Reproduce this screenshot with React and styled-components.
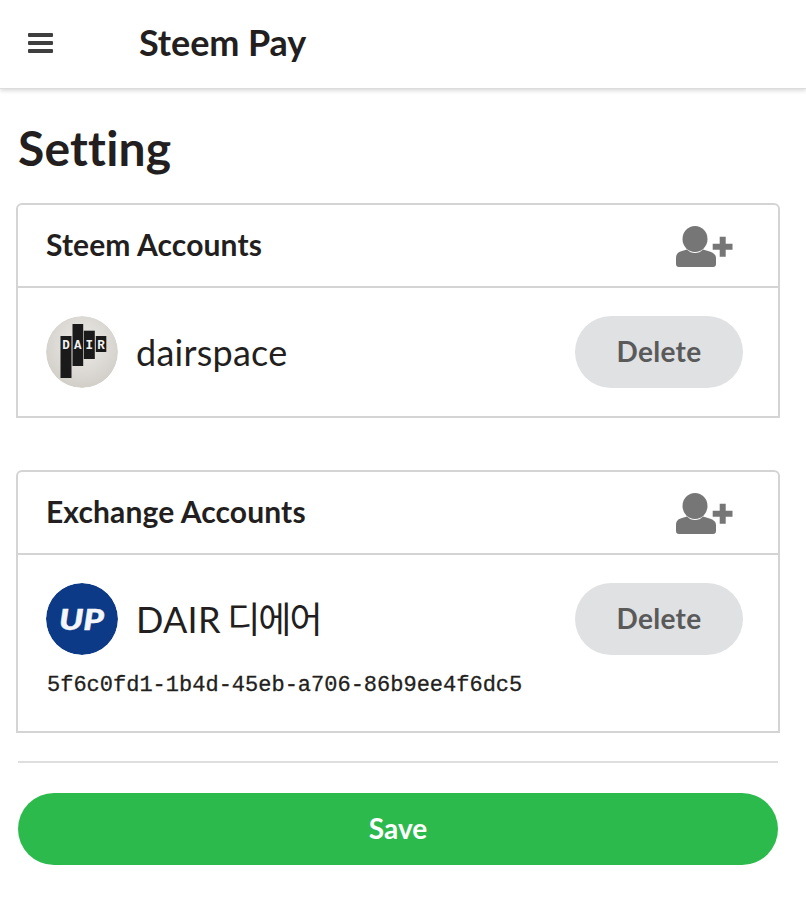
import React from "react";
import styled, { createGlobalStyle } from "styled-components";

const Global = createGlobalStyle`
  html, body { margin: 0; padding: 0; background: #fff; }
  body { font-family: Lato, "Noto Sans CJK KR", sans-serif; color: #231f20; }
  * { box-sizing: border-box; }
`;
const Page = styled.div`width: 806px; height: 914px; overflow: hidden;`;
const TopBar = styled.header`
  height: 89px; display: flex; align-items: center; padding-left: 28px;
  background: #fff; border-bottom: 1px solid #dcdcdc;
  box-shadow: 0 2px 4px rgba(0,0,0,.14);
`;
const Burger = styled.svg`width: 25px; height: 25px; flex: none; display: block; margin-top: -4px;`;
const Brand = styled.div`
  margin-left: 86px; font-size: 36px; font-weight: 700; line-height: 1; letter-spacing: -0.1px; margin-top: -4px;
`;
const Content = styled.main`padding: 30px 28px 0 16px;`;
const Title = styled.h1`
  margin: 0 0 26px 2px; font-size: 48px; font-weight: 700; line-height: 58px; letter-spacing: 0.2px; height: 58px;
`;
const Card = styled.section`
  width: 764px; margin-bottom: ${p => p.$mb}px; border: 2px solid #d4d4d5; border-radius: 6px 6px 0 0;
`;
const CardHead = styled.div`
  height: 83px; padding: 0 45px 0 28px; display: flex; align-items: center; justify-content: space-between;
  border-bottom: 2px solid #d4d4d5;
`;
const CardTitle = styled.h2`margin: 0; font-size: 30px; font-weight: 700; letter-spacing: 0.12px; margin-top: -3px;`;
const CardBody = styled.div`padding: 28px 35px 0 28px; height: ${p => p.$h}px;`;
const Row = styled.div`display: flex; align-items: center;`;
const Avatar = styled.svg`width: 72px; height: 72px; flex: none; display: block; border-radius: 50%;`;
const Name = styled.div`margin-left: 18px; font-size: 36px; line-height: 1; flex: 1; letter-spacing: 0.25px;`;
const Hangul = styled.span`letter-spacing: -2px; margin-left: -3px;`;
const DeleteButton = styled.button`
  width: 168px; height: 72px; border: 0; border-radius: 36px; background: #e0e1e2; color: #5a5a5a;
  font: 700 28px Lato, sans-serif; letter-spacing: 0.3px; padding: 0 0 3px; flex: none;
`;
const ApiKey = styled.div`
  margin: 17px 0 0 1px; font: 400 22px/27px "Liberation Mono", monospace; color: #231f20; white-space: nowrap;
  -webkit-text-stroke: 0.3px #231f20;
`;
const Rule = styled.hr`margin: 0 0 30px 2px; width: 760px; border: 0; border-top: 2px solid #dedede;`;
const SaveButton = styled.button`
  display: block; margin-left: 2px; width: 760px; height: 72px; border: 0; border-radius: 36px; background: #2cba4d; color: #fff;
  font: 700 28px Lato, sans-serif; padding: 0 0 3px;
`;
const IconSvg = styled.svg`width: 57px; height: 41px; display: block; flex: none; margin-top: 2px;`;

const AddUser = () => (
  <IconSvg viewBox="0 0 57 41">
    <ellipse cx="19" cy="13" rx="12.5" ry="13" fill="#767676" />
    <path d="M0 32c0-4 2-6 6-7l5-1.500c2 2.500 5 3.500 8 3.500s6-1 8-3.500l5 1.500c4 1 8 3 8 7v6c0 2-1 3-3 3H3c-2 0-3-1-3-3z" fill="#767676" />
    <path d="M43.700 10.700h6v7h6.800v6h-6.800v7h-6v-7H36.700v-6h7z" fill="#767676" />
  </IconSvg>
);

const DairLogo = () => (
  <Avatar viewBox="0 0 72 72">
    <defs>
      <radialGradient id="g" cx="50%" cy="40%" r="65%">
        <stop offset="0" stopColor="#eeece8" />
        <stop offset="1" stopColor="#cfccc6" />
      </radialGradient>
    </defs>
    <circle cx="36" cy="36" r="36" fill="url(#g)" />
    <rect x="14.500" y="20" width="11" height="42" fill="#1a1a1a" />
    <rect x="26.500" y="8" width="10.700" height="42" fill="#1a1a1a" />
    <rect x="37.800" y="14.700" width="11" height="28.300" fill="#1a1a1a" />
    <rect x="49.800" y="20" width="10.500" height="16" fill="#1a1a1a" />
    <g fill="#f2f2f2" fontFamily="'Liberation Mono', monospace" fontWeight="700" fontSize="12.500" textAnchor="middle">
      <text x="20" y="32.500">D</text>
      <text x="31.800" y="32.500">A</text>
      <text x="43.300" y="32.500">I</text>
      <text x="55" y="32.500">R</text>
    </g>
  </Avatar>
);

const UpLogo = () => (
  <Avatar viewBox="0 0 72 72">
    <circle cx="36" cy="36" r="36" fill="#0c3a87" />
    <text x="13" y="47" fill="#f4f6fa" stroke="#f4f6fa" strokeWidth="0.4" fontFamily="Lato, sans-serif" fontStyle="italic" fontWeight="900" fontSize="28" textLength="45" lengthAdjust="spacingAndGlyphs">UP</text>
  </Avatar>
);

export default function App() {
  return (
    <Page>
      <Global />
      <TopBar>
        <Burger viewBox="0 0 25 25">
          <g fill="#3f3f3f">
            <rect x="0" y="3" width="25" height="4" rx="1" />
            <rect x="0" y="11" width="25" height="4" rx="1" />
            <rect x="0" y="19" width="25" height="4" rx="1" />
          </g>
        </Burger>
        <Brand>Steem Pay</Brand>
      </TopBar>
      <Content>
        <Title>Setting</Title>
        <Card $mb={52}>
          <CardHead>
            <CardTitle>Steem Accounts</CardTitle>
            <AddUser />
          </CardHead>
          <CardBody $h={128}>
            <Row>
              <DairLogo />
              <Name>dairspace</Name>
              <DeleteButton>Delete</DeleteButton>
            </Row>
          </CardBody>
        </Card>
        <Card $mb={28}>
          <CardHead>
            <CardTitle>Exchange Accounts</CardTitle>
            <AddUser />
          </CardHead>
          <CardBody $h={176}>
            <Row>
              <UpLogo />
              <Name>DAIR <Hangul>디에어</Hangul></Name>
              <DeleteButton>Delete</DeleteButton>
            </Row>
            <ApiKey>5f6c0fd1-1b4d-45eb-a706-86b9ee4f6dc5</ApiKey>
          </CardBody>
        </Card>
        <Rule />
        <SaveButton>Save</SaveButton>
      </Content>
    </Page>
  );
}
